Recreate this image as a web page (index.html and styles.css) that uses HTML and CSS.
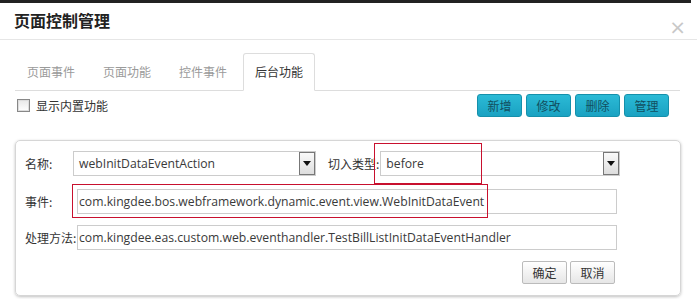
FILE: index.html
```html
<!DOCTYPE html>
<html lang="zh">
<head>
<meta charset="UTF-8">
<title>页面控制管理</title>
<link rel="stylesheet" href="styles.css">
</head>
<body>
<div class="topbar"></div>
<div class="header">
  <div class="title">页面控制管理</div>
  <div class="close">×</div>
</div>
<div class="content">
  <div class="tabs">
    <div class="tab">页面事件</div>
    <div class="tab">页面功能</div>
    <div class="tab">控件事件</div>
    <div class="tab active">后台功能</div>
  </div>
  <div class="toolbar">
    <label class="check"><span class="box"></span>显示内置功能</label>
    <div class="actions">
      <button class="btn-teal">新增</button>
      <button class="btn-teal">修改</button>
      <button class="btn-teal">删除</button>
      <button class="btn-teal">管理</button>
    </div>
  </div>
  <div class="panel">
    <div class="row row-first">
      <span class="label name-label">名称:</span>
      <div class="select name-select"><span class="val">webInitDataEventAction</span><span class="arrow"></span></div>
      <span class="label type-label">切入类型:</span>
      <div class="select type-select"><span class="val">before</span><span class="arrow"></span></div>
    </div>
    <div class="row">
      <span class="label">事件:</span>
      <div class="field">com.kingdee.bos.webframework.dynamic.event.view.WebInitDataEvent</div>
    </div>
    <div class="row">
      <span class="label">处理方法:</span>
      <div class="field">com.kingdee.eas.custom.web.eventhandler.TestBillListInitDataEventHandler</div>
    </div>
    <div class="footer">
      <button class="btn-gray">确定</button>
      <button class="btn-gray">取消</button>
    </div>
    <div class="mark mark-type"></div>
    <div class="mark mark-event"></div>
  </div>
</div>
</body>
</html>
```

FILE: styles.css
```css
body { margin: 0; background: #fff; color: #333; font-family: "Open Sans", "Noto Sans CJK SC", sans-serif; font-size: 12px; width: 697px; height: 299px; overflow: hidden; }
.topbar { height: 3px; background: #222; margin-right: 6px; }
.header { height: 36px; border-bottom: 1px solid #e6e6e6; display: flex; align-items: center; justify-content: space-between; padding: 0 11px 0 14px; }
.title { font-family: "Noto Sans CJK SC", sans-serif; font-size: 16px; font-weight: bold; color: #222; margin-top: -2px; }
.close { font-family: "DejaVu Sans", sans-serif; font-size: 20px; color: #c8c8c8; margin-top: 11px; }
.content { padding: 13px 15px 0 15px; position: relative; }
.tabs { display: flex; border-bottom: 1px solid #ddd; height: 37px; margin-right: 2px; }
.tab { font-family: "Noto Sans CJK SC", sans-serif; font-size: 12px; color: #9a9a9a; padding: 0 12px; line-height: 37px; margin-right: 4px; }
.tab.active { color: #333; background: #fff; border: 1px solid #ddd; border-bottom-color: #fff; border-radius: 3px 3px 0 0; line-height: 36px; padding: 0 11px; box-sizing: border-box; height: 38px; }
.toolbar { display: flex; justify-content: space-between; align-items: flex-start; margin-top: 3px; height: 46px; }
.check { display: flex; align-items: center; font-family: "Noto Sans CJK SC", sans-serif; font-size: 12px; color: #333; margin: 3px 0 0 2px; }
.box { width: 11px; height: 11px; border: 1px solid #888; background: linear-gradient(#e8e8e8, #fff); margin-right: 6px; box-shadow: inset 0 0 0 1px #ddd; }
.actions { display: flex; gap: 4px; margin-right: 13px; }
.btn-teal { width: 45px; height: 23px; border: 1px solid #1590ab; border-radius: 3px; background: linear-gradient(#2bbad6, #1aa2c2); color: #124f60; font-family: "Noto Sans CJK SC", sans-serif; font-size: 12px; padding: 0; }
.panel { position: relative; border: 1px solid #d6d6d6; border-radius: 5px; box-shadow: 0 1px 3px rgba(0,0,0,0.25); height: 156px; margin-right: 1px; padding: 9px 0 0 9px; box-sizing: border-box; }
.row { display: flex; align-items: center; height: 25px; margin-bottom: 11px; }
.row-first { height: 26px; margin-bottom: 13px; }
.label { font-family: "Noto Sans CJK SC", sans-serif; font-size: 12px; color: #333; width: 52px; }
.name-label { width: 48px; }
.type-label { width: auto; margin: 0 1px 0 12px; }
.select { position: relative; height: 25px; border: 1px solid #ccc; display: flex; align-items: center; box-sizing: border-box; }
.name-select { width: 243px; }
.type-select { width: 240px; }
.val { padding-left: 5px; font-size: 12.2px; color: #3a3a3a; }
.arrow { position: absolute; right: 0; top: 0; width: 16px; height: 23px; border: 1px solid #777; box-sizing: border-box; background: linear-gradient(#fafafa, #ddd); }
.arrow::after { content: ""; position: absolute; left: 3px; top: 8px; border-left: 4px solid transparent; border-right: 4px solid transparent; border-top: 5px solid #111; }
.field { height: 25px; width: 540px; border: 1px solid #ccc; box-sizing: border-box; font-size: 12.2px; line-height: 23px; padding-left: 1px; color: #3a3a3a; }
.footer { display: flex; justify-content: flex-end; gap: 3px; margin-right: 65px; margin-top: 1px; }
.btn-gray { width: 45px; height: 23px; border: 1px solid #bbb; border-radius: 2px; background: linear-gradient(#fff, #e6e6e6); font-family: "Noto Sans CJK SC", sans-serif; font-size: 12px; color: #333; padding: 0; }
.mark { position: absolute; border: 1px solid #c8102e; }
.mark-type { left: 358px; top: 2px; width: 106px; height: 39px; }
.mark-event { left: 56px; top: 43px; width: 414px; height: 32px; }
```
